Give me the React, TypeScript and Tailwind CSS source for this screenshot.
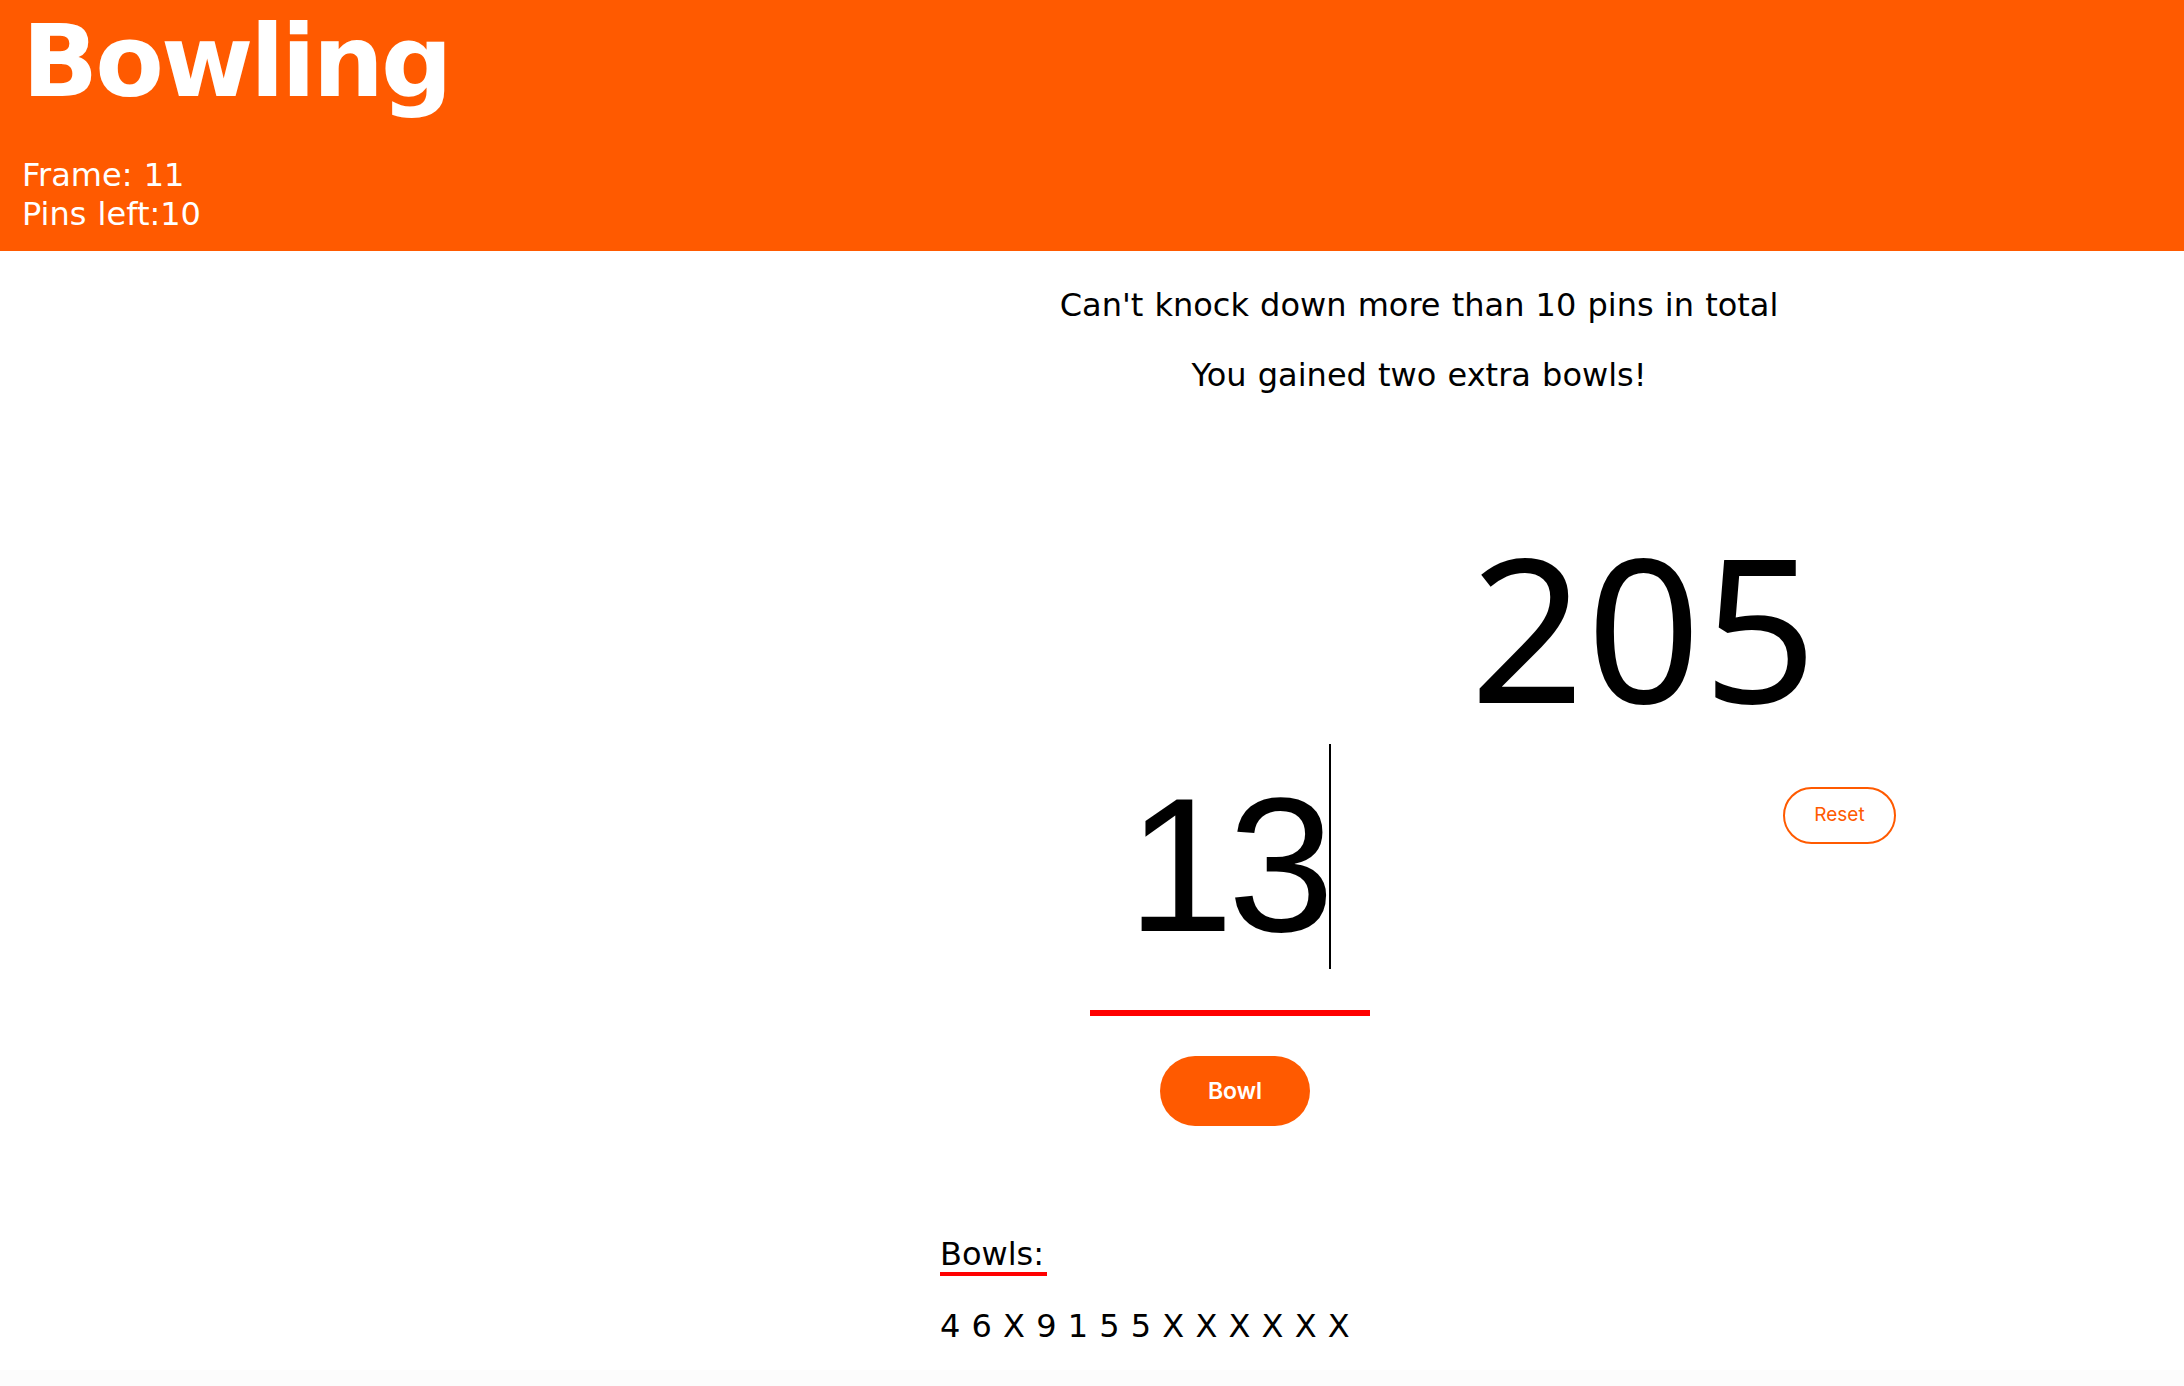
import React from "react";

export default function App() {
  const bowls = ["4", "6", "X", "9", "1", "5", "5", "X", "X", "X", "X", "X", "X"];
  return (
    <div className="min-h-screen bg-white text-black font-['DejaVu_Sans',Verdana,sans-serif]">
      <header className="h-[251px] bg-[#FF5A00] pl-[22px] pt-[12px] text-white">
        <h1 className="m-0 text-[100px] leading-[100px] font-bold tracking-[-3px]">Bowling</h1>
        <div className="mt-[44px] text-[32px] leading-[39px] [word-spacing:1px]">
          <div>Frame: 11</div>
          <div>Pins left:10</div>
        </div>
      </header>

      <div className="flex">
        <div className="w-[654px] shrink-0" />
        <main className="flex-1">
          <div className="pt-[34px] text-center text-[32px] leading-[40px] [word-spacing:1px]">
            <p>Can't knock down more than 10 pins in total</p>
            <p className="mt-[30px]">You gained two extra bowls!</p>
          </div>

          <div className="flex">
            <div className="ml-[436px] pt-[349px] w-[280px] shrink-0">
              <div className="w-[280px] border-b-[6px] border-[#FF0000] pb-[25px]">
                <div className="flex items-start pl-[37px]">
                  <span className="font-['Liberation_Sans',Arial,sans-serif] text-[192px] leading-[241px] tracking-[-6px]">13</span>
                  <span className="h-[225px] w-[2px] bg-black" />
                </div>
              </div>
              <button className="ml-[70px] mt-[40px] flex h-[70px] w-[150px] items-center justify-center rounded-full bg-[#FF5A00] font-['Inter',sans-serif] text-[23px] font-semibold text-white">
                Bowl
              </button>
            </div>

            <div className="ml-[100px] pt-[131px]">
              <div className="font-['Noto_Sans','Open_Sans',sans-serif] text-[200px] leading-[200px] tracking-[2px]">205</div>
              <button className="ml-[313px] mt-[61px] flex h-[57px] w-[113px] items-center justify-center rounded-full border-2 border-[#FF5A00] font-['Inter',sans-serif] text-[19px] text-[#FF5A00]">
                Reset
              </button>
            </div>
          </div>

          <div className="ml-[286px] mt-[111px]">
            <span className="inline-block border-b-4 border-[#FF0000] pr-[3px] text-[32px] leading-[35px]">Bowls:</span>
            <div className="mt-[30px] text-[32px] leading-[40px] [word-spacing:1px]">
              {bowls.join(" ")}
            </div>
          </div>
        </main>
      </div>
      <div className="mt-[24px] h-[20px] bg-[#fcfcfc]" />
    </div>
  );
}
